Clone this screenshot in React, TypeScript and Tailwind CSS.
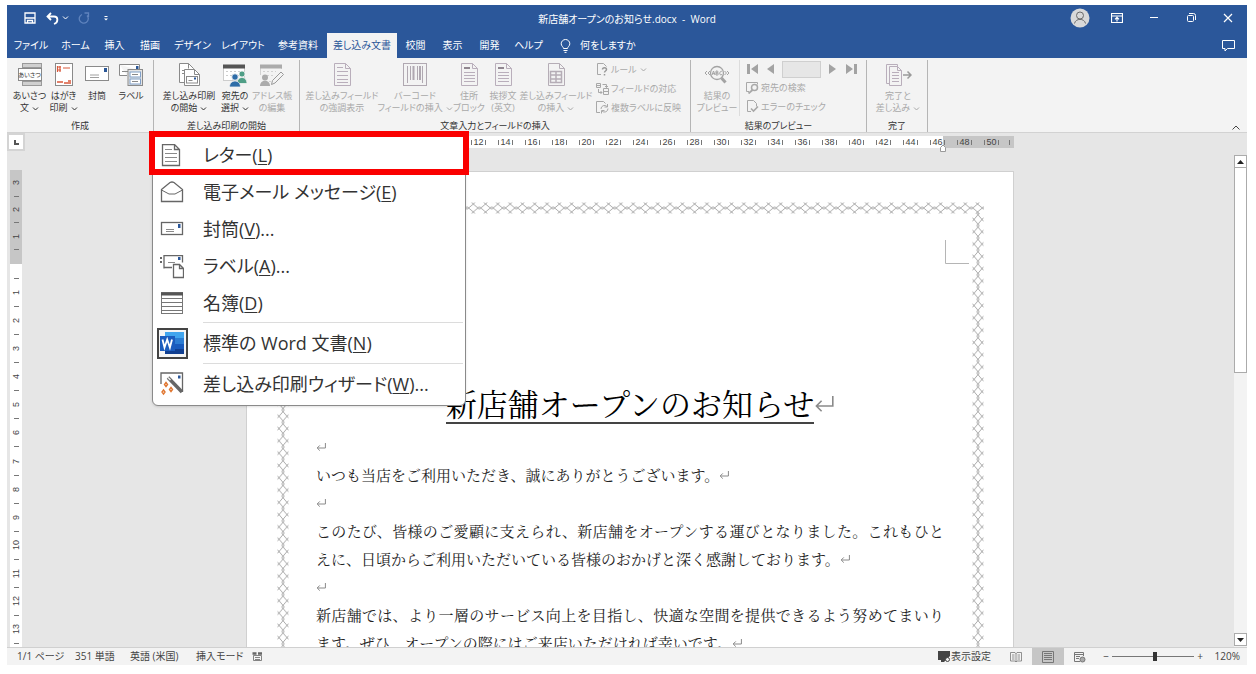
import { ReactNode, SVGProps } from "react";

type IconProps = SVGProps<SVGSVGElement>;

function Icon({ children, size = 24, ...rest }: IconProps & { size?: number }) {
  return (
    <svg width={size} height={size} viewBox={`0 0 ${size} ${size}`} fill="none" stroke="currentColor" aria-hidden="true" className="shrink-0" {...rest}>
      {children}
    </svg>
  );
}

const Chevron = () => (
  <svg width="7" height="6" viewBox="0 0 7 6" fill="none" stroke="currentColor" className="ml-[3px] inline-block align-middle" aria-hidden="true">
    <path d="M1 1.5l2.5 2.5L6 1.5" />
  </svg>
);

const ReturnMark = ({ size = 10 }: { size?: number }) => (
  <svg width={size} height={size} viewBox="0 0 10 10" fill="none" stroke="#8a8a8a" strokeWidth={size > 10 ? 0.8 : 1} className="inline-block align-[1px]" aria-hidden="true">
    <path d="M9.4 1v5H1.2M3.8 3.4L1.2 6l2.6 2.6" />
  </svg>
);

/* ---------- ribbon icons (24px) ---------- */
const GreetingIcon = () => (
  <span className="flex h-6 w-6 flex-col">
    <i className="ml-1 h-[5px] border border-[#9a9a9a] bg-[#d0d0d0]" />
    <b className="flex h-[13px] items-center justify-center border border-[#8a8a8a] bg-white text-[6px] leading-none font-normal whitespace-nowrap text-[#333]">あいさつ</b>
    <i className="ml-1 h-[5px] border border-[#9a9a9a] bg-[#d0d0d0]" />
  </span>
);
const PostcardIcon = () => (
  <Icon stroke="#8a8a8a">
    <rect x="3.5" y="0.5" width="17" height="22" fill="#fff" />
    <path d="M5.5 3v6M8 3v6M5 4h4M5 7h4M11 5h7" stroke="#d9583b" strokeWidth="1.2" />
    <path d="M5 19h6M12 20h5M16 18h3M17 20h2" stroke="#d9583b" strokeWidth="1.4" />
  </Icon>
);
const EnvelopeIcon = () => (
  <Icon stroke="#8a8a8a">
    <rect x="0.5" y="3.5" width="23" height="14" fill="#fff" />
    <path d="M5 12h9M5 14.5h9" stroke="#a0a0a0" />
    <rect x="19" y="5" width="3" height="4" fill="#2b5797" stroke="none" />
  </Icon>
);
const LabelsIcon = () => (
  <Icon stroke="#8a8a8a">
    <path d="M0.5 1.5h20v6M8 12.5H0.5v-11" fill="#fff" />
    <path d="M3 8.5h8" />
    <rect x="17" y="3" width="2.5" height="3" fill="#2b5797" stroke="none" />
    <rect x="9" y="6.5" width="14.5" height="16" fill="#e4e4e4" />
    <rect x="11" y="9" width="10.5" height="5" fill="#fff" stroke="#7f9fc8" />
    <rect x="11" y="16" width="10.5" height="5" fill="#fff" stroke="#7f9fc8" />
    <path d="M13 11.5h6M13 18.5h6" />
  </Icon>
);
const MergeStartIcon = () => (
  <Icon stroke="#8a8a8a">
    <path d="M2.5 0.5h9l5 5v14h-14z" fill="#fff" />
    <path d="M11.5 0.5v5M5 7.5h3M5 10.5h2" />
    <path d="M7.5 6.5h10l5 5v11h-15z" fill="#fff" />
    <path d="M17.5 6.5v5h5" />
    <rect x="9.5" y="13.5" width="11" height="6.5" />
    <path d="M11.5 17.5h4" />
    <rect x="17" y="14.5" width="2" height="2" fill="#2b5797" stroke="none" />
  </Icon>
);
const RecipientsIcon = () => (
  <Icon stroke="#cdcdcd">
    <rect x="0.5" y="2.5" width="21" height="15" fill="#fff" />
    <path d="M3 8.5h16M3 12.5h16" strokeDasharray="2 2" />
    <rect x="0" y="1.5" width="22" height="4" fill="#555" stroke="none" />
    <g stroke="#f3f3f3" strokeWidth="0.8">
      <circle cx="19" cy="11" r="3" fill="#4f9e86" />
      <path d="M14 20.5c0-8 10-8 10 0z" fill="#4f9e86" />
      <circle cx="12" cy="14" r="3.2" fill="#2e6da8" />
      <path d="M6.5 24c0-8 11-8 11 0z" fill="#2e6da8" />
    </g>
  </Icon>
);
const AddressEditIcon = () => (
  <Icon stroke="#d2d2d2">
    <path d="M0.5 12V2.5h21V6M9 18.5h2" />
    <path d="M3 8.5h13M3 12.5h10" strokeDasharray="2 2" />
    <rect x="0" y="1.5" width="22" height="4" fill="#ababab" stroke="none" />
    <circle cx="5" cy="14.5" r="3" fill="#ababab" stroke="none" />
    <path d="M0 23c0-7 10-7 10 0z" fill="#ababab" stroke="none" />
    <path d="M11.5 21.5l1-4L21 9l2.5 2.5L15 20z" fill="#f3f3f3" stroke="#9a9a9a" />
  </Icon>
);
const DocPath = () => <path d="M4.5 0.5h11l5 5v17h-16zM15.5 0.5v5h5" />;
const HighlightIcon = () => (
  <Icon stroke="#b9aebb">
    <DocPath />
    <path d="M7 4.5h6M7 8.5h11M7 12.5h11M7 16.5h11M7 19.5h11" />
  </Icon>
);
const BarcodeIcon = () => (
  <Icon stroke="#b0a8b1">
    <rect x="0.5" y="0.5" width="23" height="22" />
    <path d="M4.5 3v17M7.5 3v14M14.5 3v14M19.5 3v17" />
    <path d="M10.5 3v14M17 3v14" strokeWidth="2" />
  </Icon>
);
const AddressBlockIcon = () => (
  <Icon stroke="#b9aebb">
    <DocPath />
    <path d="M7 5h6" stroke="#908690" strokeWidth="2" />
    <path d="M7 9.5h11M7 12.5h11M7 15.5h11M7 18.5h11" />
  </Icon>
);
const InsertFieldIcon = () => (
  <Icon stroke="#b5adb6">
    <DocPath />
    <path d="M6.5 8.5h11v11h-11zM6.5 12h11M6.5 16h11M12 8.5v11" strokeWidth="1.5" />
  </Icon>
);
const PreviewIcon = () => (
  <Icon size={26} stroke="#a3a3a3">
    <circle cx="13" cy="10" r="6.5" strokeWidth="1.3" />
    <path d="M17.5 15l4 4.5" strokeWidth="3" />
    <path d="M3 8L1 10l2 2M6 8l-2 2 2 2M23 8l2 2-2 2M20.5 8l2 2-2 2" />
    <path d="M8 12l1.5-4L11 12M8.5 10.7h2M12 8v4h1.3a1 1 0 0 0 0-2H12h1a1 1 0 0 0 0-2zM18 8.5c-2.5-1.5-3.5 5 0 3" strokeWidth="1" />
  </Icon>
);
const FinishIcon = () => (
  <Icon size={28} stroke="#b9aebb">
    <path d="M2.5 1.5h11v19h-11z" />
    <path d="M5.5 3.5h8l4 4v15h-12z" fill="#f3f3f3" />
    <path d="M13.5 3.5v4h4M8 9.5h7M8 12.5h7M8 15.5h7M8 18.5h7" />
    <path d="M19 12h8M23.5 8.5L27 12l-3.5 3.5" stroke="#9a9a9a" strokeWidth="1.5" />
  </Icon>
);

const RulesIcon = () => (
  <Icon size={13} stroke="#a8a8a8">
    <path d="M5 11.5H1.5v-11h6l3 3" />
    <path d="M6.5 6.5c0-2.5 4-2.5 4 0 0 1.5-2 1.5-2 3M8.5 11v1.5" stroke="#999" strokeWidth="1.5" />
  </Icon>
);
const MatchIcon = () => (
  <Icon size={13} stroke="#a8a8a8">
    <path d="M0.5 1.5h4v4h-4zM7.5 6.5h5v6h-5zM6.5 2.5h4v3M2.5 7v3.5h3.5M1 3.5h3M8 9.5h4M9 4l1.5 1.5L12 4M4.5 9L6 10.5 4.5 12" />
  </Icon>
);
const UpdateIcon = () => (
  <Icon size={13} stroke="#a8a8a8">
    <path d="M4 11.5H0.5v-11h7l2 2" />
    <path d="M5 8a3.5 3.5 0 0 1 6-2.5M12 7.5a3.5 3.5 0 0 1-6 2.5M11.5 3v3H8.5M5.5 12.5V9.5h3" />
  </Icon>
);
const FindIcon = () => (
  <Icon size={13} stroke="#a8a8a8">
    <path d="M3 10.5H0.5v-9h11v2" />
    <circle cx="8.5" cy="6.5" r="3" strokeWidth="1.5" />
    <path d="M6.5 9l-4 3.5" strokeWidth="1.8" />
  </Icon>
);
const CheckIcon = () => (
  <Icon size={13} stroke="#a8a8a8">
    <path d="M5 11.5H1.5v-11h6l3 3v3" />
    <path d="M5 8.5l2.5 2.5L12 6.5" strokeWidth="1.6" />
  </Icon>
);

/* ---------- title bar ---------- */
const TitleBar = () => (
  <header className="relative flex h-[26px] items-center justify-between text-[10px] text-white">
    <div className="flex items-center pl-[17px]">
      <button aria-label="上書き保存">
        <Icon size={12}>
          <path d="M1 1h10v10H1zM1 6h10M3.5 11V8.5h5V11" strokeWidth="1.3" />
        </Icon>
      </button>
      <button aria-label="元に戻す" className="ml-[10px] flex items-center">
        <Icon size={13}>
          <path d="M5 1L1.5 4.5 5 8M2 4.5h6c4.500 0 4.500 6 0 7.5" strokeWidth="1.8" />
        </Icon>
        <Chevron />
      </button>
      <button aria-label="やり直し" disabled className="ml-[9px] text-[#5f83bd]">
        <Icon size={12}>
          <path d="M4 2.5a4.5 4.5 0 1 0 5 1M6.5 1h4v4" strokeWidth="1.3" />
        </Icon>
      </button>
      <button aria-label="クイック アクセス ツール バーのカスタマイズ" className="ml-[13px]">
        <Icon size={6}>
          <path d="M1.5 1.5h3" />
          <path d="M1 3.5h4L3 5.5z" fill="currentColor" stroke="none" />
        </Icon>
      </button>
    </div>
    <h1 className="absolute inset-x-0 top-[6px] text-center leading-4">新店舗オープンのお知らせ.docx&nbsp; -&nbsp; Word</h1>
    <div className="relative flex items-center">
      <button aria-label="アカウント" className="mr-[21px]">
        <Icon size={20} stroke="#6b6b6b">
          <circle cx="10" cy="10" r="9.5" fill="#d9d9d9" stroke="none" />
          <circle cx="10" cy="7.5" r="3.5" />
          <path d="M4.5 15.5c1-5.5 10-5.5 11 0" />
        </Icon>
      </button>
      <button aria-label="リボンの表示オプション" className="mr-[26px]">
        <Icon size={12}>
          <path d="M0.5 1.5h11v9H0.5zM0.5 4h11M6 9.5V5.5M4 7.3l2-2 2 2" strokeWidth="1.2" />
        </Icon>
      </button>
      <button aria-label="最小化" className="mr-[27px]">
        <Icon size={10}>
          <path d="M1 4.5h8" />
        </Icon>
      </button>
      <button aria-label="元に戻す (縮小)" className="mr-[27px]">
        <Icon size={10}>
          <rect x="1.5" y="2.5" width="6" height="6" rx="1" />
          <path d="M3 0.5h4.500q2 0 2 2V7" />
        </Icon>
      </button>
      <button aria-label="閉じる" className="mr-[14px]">
        <Icon size={10}>
          <path d="M1 1l8 8M9 1L1 9" strokeWidth="1.2" />
        </Icon>
      </button>
    </div>
  </header>
);

const TABS: [string, string][] = [
  ["ファイル", "w-[46px]"],
  ["ホーム", "w-[43px]"],
  ["挿入", "w-[35px]"],
  ["描画", "w-[36px]"],
  ["デザイン", "w-[49px]"],
  ["レイアウト", "w-[52px]"],
  ["参考資料", "w-[58px]"],
  ["差し込み文書", "w-[70px]"],
  ["校閲", "w-[37px]"],
  ["表示", "w-[37px]"],
  ["開発", "w-[37px]"],
  ["ヘルプ", "w-[41px]"],
];

const TabBar = () => (
  <nav className="flex h-[27px] items-end pl-px text-[10px] text-white" role="tablist">
    {TABS.map(([name, width]) => {
      const active = name === "差し込み文書";
      return (
        <button
          key={name}
          role="tab"
          aria-selected={active}
          className={`h-[25px] whitespace-nowrap text-center ${width} ${active ? "bg-[#f3f3f3] text-[#2b579a]" : ""}`}
        >
          {name}
        </button>
      );
    })}
    <button className="ml-[11px] flex h-[25px] items-center gap-[9px]">
      <svg width="11" height="14" viewBox="0 0 11 14" fill="none" stroke="currentColor" aria-hidden="true">
        <path d="M3.5 9.5C3.5 8 1.2 7 1.2 4.8a4.3 4.3 0 0 1 8.6 0C9.8 7 7.5 8 7.5 9.5zM3.5 11.5h4M4.5 13.4h2" />
      </svg>
      何をしますか
    </button>
    <button aria-label="コメント" className="mr-3 ml-auto flex h-[25px] items-center">
      <Icon size={13}>
        <path d="M0.5 1.5h12v8H5.5L3 12V9.5H0.5z" />
      </Icon>
    </button>
  </nav>
);

/* ---------- ribbon ---------- */
function BigButton({ icon, lines, width, disabled, menu }: { icon: ReactNode; lines: string[]; width: string; disabled?: boolean; menu?: boolean }) {
  return (
    <button disabled={disabled} className={`flex shrink-0 flex-col items-center ${width} ${disabled ? "text-[#a9a9a9]" : "text-[#333]"}`}>
      <span className="flex h-[27px] items-start justify-center">{icon}</span>
      {lines.map((line, i) => (
        <span key={line} className="whitespace-nowrap leading-3">
          {line}
          {menu && i === lines.length - 1 && <Chevron />}
        </span>
      ))}
    </button>
  );
}

function SmallButton({ icon, children }: { icon: ReactNode; children: ReactNode }) {
  return (
    <button disabled className="flex h-[19px] items-center gap-[2px] whitespace-nowrap text-[#a9a9a9]">
      {icon}
      <span>{children}</span>
    </button>
  );
}

function Group({ label, width, children }: { label: string; width: string; children: ReactNode }) {
  return (
    <section aria-label={label} className={`flex shrink-0 flex-col border-r border-[#b5b5b5] ${width}`}>
      <div className="flex min-h-0 flex-1 items-start">{children}</div>
      <p className="text-center leading-3 text-[#333]">{label}</p>
    </section>
  );
}

const Ribbon = () => (
  <div className="relative flex h-[75px] border-b border-[#d2d2d2] bg-[#f3f3f3] pt-[2px] text-[9px]">
    <Group label="作成" width="w-[147px]">
      <div className="flex pt-[3px] pl-[5px]">
        <BigButton icon={<GreetingIcon />} lines={["あいさつ", "文"]} width="w-[35px]" menu />
        <BigButton icon={<PostcardIcon />} lines={["はがき", "印刷"]} width="w-[33px]" menu />
        <BigButton icon={<EnvelopeIcon />} lines={["封筒"]} width="w-[34px]" />
        <BigButton icon={<LabelsIcon />} lines={["ラベル"]} width="w-[34px]" />
      </div>
    </Group>
    <Group label="差し込み印刷の開始" width="w-[146px]">
      <div className="flex pt-[3px] pl-[6px]">
        <BigButton icon={<MergeStartIcon />} lines={["差し込み印刷", "の開始"]} width="w-[58px]" menu />
        <BigButton icon={<RecipientsIcon />} lines={["宛先の", "選択"]} width="w-[34px]" menu />
        <BigButton icon={<AddressEditIcon />} lines={["アドレス帳", "の編集"]} width="w-[40px]" disabled />
      </div>
    </Group>
    <Group label="文章入力とフィールドの挿入" width="w-[391px]">
      <div className="flex pt-[3px] pl-[5px]">
        <BigButton icon={<HighlightIcon />} lines={["差し込みフィールド", "の強調表示"]} width="w-[74px]" disabled />
        <BigButton icon={<BarcodeIcon />} lines={["バーコード", "フィールドの挿入"]} width="w-[72px]" disabled menu />
        <BigButton icon={<AddressBlockIcon />} lines={["住所", "ブロック"]} width="w-[36px]" disabled />
        <BigButton icon={<AddressBlockIcon />} lines={["挨拶文", "(英文)"]} width="w-[32px]" disabled />
        <BigButton icon={<InsertFieldIcon />} lines={["差し込みフィールド", "の挿入"]} width="w-[74px]" disabled menu />
      </div>
      <div className="pl-[3px]">
        <SmallButton icon={<RulesIcon />}>
          ルール
          <Chevron />
        </SmallButton>
        <SmallButton icon={<MatchIcon />}>フィールドの対応</SmallButton>
        <SmallButton icon={<UpdateIcon />}>複数ラベルに反映</SmallButton>
      </div>
    </Group>
    <Group label="結果のプレビュー" width="w-[176px]">
      <div className="pt-[3px] pl-[5px]">
        <BigButton icon={<PreviewIcon />} lines={["結果の", "プレビュー"]} width="w-[42px]" disabled />
      </div>
      <div className="ml-px border-l border-[#dcdcdc] pl-[6px]">
        <div className="flex h-[18px] items-center text-[#a3a3a3]">
          <button disabled aria-label="先頭のレコード">
            <Icon size={12} fill="currentColor" stroke="none">
              <path d="M1 1h3v10H1zM12 1v10L5 6z" />
            </Icon>
          </button>
          <button disabled aria-label="前のレコード" className="ml-2">
            <Icon size={10} fill="currentColor" stroke="none">
              <path d="M8 0v10L1 5z" />
            </Icon>
          </button>
          <input disabled aria-label="レコード" className="ml-[6px] h-[17px] w-[39px] border border-[#cfcfcf] bg-[#e6e6e6]" />
          <button disabled aria-label="次のレコード" className="ml-[7px]">
            <Icon size={10} fill="currentColor" stroke="none">
              <path d="M1 0v10l7-5z" />
            </Icon>
          </button>
          <button disabled aria-label="最後のレコード" className="ml-2">
            <Icon size={12} fill="currentColor" stroke="none">
              <path d="M8 1h3v10H8zM0 1v10l7-5z" />
            </Icon>
          </button>
        </div>
        <SmallButton icon={<FindIcon />}>宛先の検索</SmallButton>
        <SmallButton icon={<CheckIcon />}>エラーのチェック</SmallButton>
      </div>
    </Group>
    <Group label="完了" width="w-[61px]">
      <div className="pt-[3px] pl-1">
        <BigButton icon={<FinishIcon />} lines={["完了と", "差し込み"]} width="w-[54px]" disabled menu />
      </div>
    </Group>
    <button aria-label="リボンを折りたたむ" className="mt-auto mr-[7px] mb-[1px] ml-auto text-[#444]">
      <svg width="8" height="6" viewBox="0 0 8 6" fill="none" stroke="currentColor" aria-hidden="true">
        <path d="M0.5 4.5L4 1l3.5 3.5" />
      </svg>
    </button>
  </div>
);

/* ---------- rulers ---------- */
const HorizontalRuler = () => (
  <div className="relative mt-[3px] ml-[3px] flex h-[12px] w-[768px] shrink-0 bg-[linear-gradient(to_right,#c6c6c6_70px,#fff_70px,#fff_697px,#c6c6c6_697px)] pl-[84px] font-['Liberation_Sans',sans-serif] text-[9px] leading-3 text-[#444]">
    {Array.from({ length: 25 }, (_, i) => (
      <div key={i} className="flex w-[27px] items-center justify-center gap-px">
        <i className="h-[5px] w-px bg-[#777]" />
        {(i + 1) * 2}
        <i className="h-[5px] w-px bg-[#777]" />
      </div>
    ))}
    <i className="ml-1 h-[5px] w-px shrink-0 self-center bg-[#777]" />
    <svg width="8" height="8" viewBox="0 0 8 8" fill="#fff" stroke="#999" className="absolute top-2 left-[693px]" aria-hidden="true">
      <path d="M1.5 7.5v-4L4 1l2.5 2.5v4z" />
    </svg>
  </div>
);

const RulerNumber = ({ value }: { value: number }) => (
  <div className="flex min-h-0 flex-1 items-center justify-center">
    <span className="rotate-180 leading-3 [writing-mode:vertical-rl]">{value}</span>
  </div>
);
const RulerDash = () => <i className="mx-auto h-px w-[5px] shrink-0 bg-[#777]" />;

const VerticalRuler = () => (
  <div className="ml-[3px] flex w-[12px] flex-1 flex-col font-['Liberation_Sans',sans-serif] text-[9px] text-[#444]">
    <div className="flex h-[94px] shrink-0 flex-col bg-[#c6c6c6] pb-[14px]">
      {[3, 2, 1].map((n) => (
        <div key={n} className="flex min-h-0 flex-1 flex-col">
          <RulerNumber value={n} />
          <RulerDash />
        </div>
      ))}
    </div>
    <div className="flex flex-1 flex-col bg-white pt-[14px] pb-[3px]">
      {Array.from({ length: 13 }, (_, i) => (
        <div key={i} className="flex min-h-0 flex-1 flex-col">
          <RulerDash />
          <RulerNumber value={i + 1} />
        </div>
      ))}
      <RulerDash />
    </div>
  </div>
);

/* ---------- document ---------- */
const PageBorder = () => (
  <svg className="absolute inset-0 h-full w-full" aria-hidden="true" fill="none">
    <defs>
      <pattern id="art-h" width="12.3" height="12" patternUnits="userSpaceOnUse" x="11" y="30">
        <path d="M4.4 0.5L12.3 7.3M4.4 11.5L12.3 4.7M7.9 0.5L0 7.3M7.9 11.5L0 4.7" stroke="#888" strokeWidth="0.7" />
      </pattern>
      <pattern id="art-v" width="12" height="12.3" patternUnits="userSpaceOnUse" x="30" y="29">
        <path d="M0.5 4.4L7.3 12.3M11.5 4.4L4.7 12.3M0.5 7.9L7.3 0M11.5 7.9L4.7 0" stroke="#888" strokeWidth="0.7" />
      </pattern>
    </defs>
    <rect x="30" y="30" width="707" height="12" fill="url(#art-h)" />
    <rect x="30" y="41" width="12" height="600" fill="url(#art-v)" />
    <rect x="30" y="41" width="12" height="600" fill="url(#art-v)" transform="translate(695 0)" />
    <path d="M698.5 68v23.500H722" stroke="#b5b5b5" />
  </svg>
);

const Page = () => (
  <article className="relative mt-[23px] ml-[3px] w-[768px] flex-1 border border-b-0 border-[#d0d0d0] bg-white px-[69px] pt-[203px] font-['Noto_Serif_CJK_JP','Noto_Serif_JP','Noto_Sans_CJK_JP',serif] text-[15px] leading-7 text-[#222] [font-feature-settings:normal]">
    <PageBorder />
    <h2 className="flex h-[58px] items-center justify-center pl-[20px] text-[31px] text-black">
      <span className="border-b-2 border-[#444] leading-[38px] whitespace-nowrap">新店舗オープンのお知らせ</span>
      <ReturnMark size={20} />
    </h2>
    <p><ReturnMark /></p>
    <p>いつも当店をご利用いただき、誠にありがとうございます。<ReturnMark /></p>
    <p><ReturnMark /></p>
    <p className="text-justify">このたび、皆様のご愛顧に支えられ、新店舗をオープンする運びとなりました。これもひとえに、日頃からご利用いただいている皆様のおかげと深く感謝しております。<ReturnMark /></p>
    <p><ReturnMark /></p>
    <p className="text-justify">新店舗では、より一層のサービス向上を目指し、快適な空間を提供できるよう努めてまいります。ぜひ、オープンの際にはご来店いただければ幸いです。<ReturnMark /></p>
  </article>
);

const ScrollBar = () => (
  <div className="mt-[22px] flex w-[13px] shrink-0 flex-col bg-[#f3f3f3]">
    <button aria-label="上へスクロール" className="flex h-[13px] items-center justify-center border border-[#ababab] bg-white">
      <svg width="7" height="4" viewBox="0 0 7 4" aria-hidden="true"><path d="M3.5 0L7 4H0z" fill="#222" /></svg>
    </button>
    <div className="h-[205px] border border-t-0 border-[#ababab] bg-white" />
    <button aria-label="下へスクロール" className="mt-auto mb-[1px] flex h-[13px] items-center justify-center border border-[#ababab] bg-white">
      <svg width="7" height="4" viewBox="0 0 7 4" aria-hidden="true"><path d="M3.5 4L7 0H0z" fill="#222" /></svg>
    </button>
  </div>
);

/* ---------- merge menu ---------- */
const LetterIcon = () => (
  <Icon stroke="#666">
    <path d="M2.5 0.5h12l5 5v16h-17zM14.5 0.5v5h5" strokeWidth="1.3" />
    <path d="M5 5.5h7M5 9.5h12M5 13.5h12M5 17.5h12" stroke="#8a8a8a" />
  </Icon>
);
const MailIcon = () => (
  <Icon stroke="#666">
    <path d="M1.5 8.5L10 1.5q2-1 4 0l8.5 7v12h-21z" strokeWidth="1.3" />
    <path d="M1.5 9l7.5 4h6l7.5-4" />
  </Icon>
);
const MenuEnvelopeIcon = () => (
  <Icon stroke="#666">
    <rect x="1.5" y="4.5" width="21" height="12" strokeWidth="1.3" />
    <path d="M6 11.5h8M6 13.5h8" stroke="#8a8a8a" />
    <rect x="18" y="6" width="2.5" height="4" fill="#2b579a" stroke="none" />
  </Icon>
);
const MenuLabelsIcon = () => (
  <Icon stroke="#666">
    <path d="M4 13.5v-13h18.5v7M4 12.5h8" strokeWidth="1.3" />
    <path d="M0 3h2M0 7h2" strokeWidth="2" />
    <path d="M8 7.5h7" stroke="#8a8a8a" />
    <rect x="18" y="2" width="2.5" height="3" fill="#2b579a" stroke="none" />
    <path d="M13.5 9.5h6l4 4v9h-10zM19.5 9.5v4h4" fill="#fff" strokeWidth="1.3" />
  </Icon>
);
const DirectoryIcon = () => (
  <Icon stroke="#777">
    <rect x="1.5" y="0.5" width="21" height="21" />
    <path d="M1 2h22" stroke="#555" strokeWidth="3" />
    <path d="M2 6.5h20M2 10.5h20M2 14.5h20M2 18.5h20" />
  </Icon>
);
const WordIcon = () => (
  <Icon size={31} stroke="none">
    <rect x="1" y="1" width="29" height="29" fill="#f5f5f5" stroke="#444" strokeWidth="2" />
    <path d="M8 4h19v6H8z" fill="#41a5ee" />
    <path d="M8 10h19v6H8z" fill="#2b7cd3" />
    <path d="M8 16h19v5H8z" fill="#185abd" />
    <path d="M8 21h19v5H8z" fill="#103f91" />
    <rect x="3" y="8" width="15" height="15" fill="#1b5cbe" />
    <path d="M5.5 11.5l2 8 2.7-8 2.7 8 2.100-8" fill="none" stroke="#fff" strokeWidth="1.8" />
  </Icon>
);
const WizardIcon = () => (
  <Icon stroke="#666">
    <path d="M1 12V1h21.5V20" strokeWidth="1.3" />
    <rect x="18" y="3.5" width="2.5" height="3" fill="#2b579a" stroke="none" />
    <path d="M8 5.5L22 20" strokeWidth="3.5" />
    <path d="M8 5.5l2.5 2.5" stroke="#eee" strokeWidth="1.5" />
    <path d="M6 10.5l1.500 2L6 14.500l-1.500-2zM3.5 18l1.500 2-1.500 2L2 20zM11 15.500l1.500 2-1.500 2-1.500-2z" stroke="#e0752f" strokeWidth="1.4" />
  </Icon>
);

type Item = { icon: ReactNode; text: string; accessKey: string; tail: string; divided?: boolean };
const ITEMS: Item[] = [
  { icon: <LetterIcon />, text: "レター", accessKey: "L", tail: "" },
  { icon: <MailIcon />, text: "電子メール メッセージ", accessKey: "E", tail: "" },
  { icon: <MenuEnvelopeIcon />, text: "封筒", accessKey: "V", tail: "..." },
  { icon: <MenuLabelsIcon />, text: "ラベル", accessKey: "A", tail: "..." },
  { icon: <DirectoryIcon />, text: "名簿", accessKey: "D", tail: "" },
  { icon: <WordIcon />, text: "標準の Word 文書", accessKey: "N", tail: "", divided: true },
  { icon: <WizardIcon />, text: "差し込み印刷ウィザード", accessKey: "W", tail: "...", divided: true },
];

const MergeMenu = () => (
  <div role="menu" className="absolute top-[130px] left-[145px] w-[314px] rounded-b-[6px] border border-[#8a8a8a] bg-white pt-px pb-px text-[18px] text-[#333] shadow-sm">
    {ITEMS.map((item) => (
      <div key={item.accessKey} className="flex flex-col">
        {item.divided && <hr className="mr-[2px] ml-[50px] border-[#dcdcdc]" />}
        <button role="menuitem" className={`flex items-center text-left ${item.divided ? "h-10" : "h-[37px]"}`}>
          <span className="flex w-[38px] justify-center">{item.icon}</span>
          <span className="pl-3 whitespace-pre">
            {item.text}(<u className="underline-offset-2">{item.accessKey}</u>){item.tail}
          </span>
        </button>
      </div>
    ))}
    <div className="pointer-events-none absolute -top-[5px] -left-1 h-[44px] w-[320px] border-[6px] border-[#fa0000]" />
  </div>
);

/* ---------- status bar ---------- */
const StatusBar = () => (
  <footer className="flex h-[18px] shrink-0 items-center border-t border-[#d0d0d0] bg-[#f3f3f3] pl-[10px] text-[10px] text-[#444]">
    <span className="w-[58px]">1/1 ページ</span>
    <span className="w-[55px]">351 単語</span>
    <span className="w-[66px]">英語 (米国)</span>
    <span className="w-[56px]">挿入モード</span>
    <Icon size={10} stroke="#666">
      <path d="M1.5 3.5h8v5h-8zM3 5.5h5M3 7.5h5" strokeWidth="0.8" />
      <path d="M0.5 1.5h4M6 1.5h4" strokeWidth="2.5" />
    </Icon>
    <div className="ml-auto flex h-full items-center">
      <button className="flex items-center">
        <svg width="14" height="12" viewBox="0 0 14 12" fill="none" aria-hidden="true">
          <path d="M1 0h12v5L9 9l-2 2H4V9H1z" fill="#444" />
          <circle cx="10.5" cy="8.5" r="2" fill="#f3f3f3" stroke="#444" />
        </svg>
        表示設定
      </button>
      <button aria-label="閲覧モード" className="flex w-[41px] justify-center pl-2">
        <Icon size={12} stroke="#777">
          <path d="M6 2v9M0.5 1.5H5l1 1 1-1h4.500v8.500H7l-1 1-1-1H0.5zM2 4h2.5M2 6h2.5M2 8h2.5M7.5 4H10M7.5 6H10M7.5 8H10" strokeWidth="0.8" />
        </Icon>
      </button>
      <button aria-label="印刷レイアウト" className="flex h-full w-8 items-center justify-center bg-[#c6c6c6]">
        <Icon size={12} stroke="#777">
          <path d="M0.5 0.5h11v11H0.5zM2 2.5h8M2 4.5h8M2 6.5h8M2 8.5h8" />
        </Icon>
      </button>
      <button aria-label="Web レイアウト" className="flex w-[32px] justify-center">
        <Icon size={12} stroke="#777">
          <path d="M6 10.5H0.5v-9h9V5M0.5 3.5h9M2 5.5h4M2 7.5h3" />
          <circle cx="8.5" cy="8.5" r="2.5" fill="#aaa" />
        </Icon>
      </button>
      <button aria-label="縮小" className="ml-1 w-3">−</button>
      <div className="flex w-[82px] items-center">
        <input type="range" aria-label="ズーム" min="10" max="190" defaultValue="104" className="h-px w-full appearance-none bg-[#777] [&::-webkit-slider-thumb]:h-[9px] [&::-webkit-slider-thumb]:w-1 [&::-webkit-slider-thumb]:appearance-none [&::-webkit-slider-thumb]:bg-[#333]" />
      </div>
      <button aria-label="拡大" className="w-3">+</button>
      <span className="w-[41px] pr-[7px] text-right">120%</span>
    </div>
  </footer>
);

export default function App() {
  return (
    <div className="h-screen bg-white pt-[5px] pr-[9px] pb-[9px] pl-[7px] font-['Open_Sans','Noto_Sans_CJK_JP',sans-serif] [font-feature-settings:'palt']" lang="ja">
      <div className="relative flex h-full flex-col">
        <div className="shrink-0 bg-[#2b579a]">
          <TitleBar />
          <TabBar />
        </div>
        <div className="shrink-0">
          <Ribbon />
        </div>
        <main className="flex min-h-0 flex-1 overflow-hidden bg-[#e6e6e6]">
          <div className="flex w-[16px] shrink-0 flex-col">
            <button aria-label="左揃えタブ" className="mb-[19px] flex h-[18px] w-[18px] shrink-0 items-center justify-center border-2 border-[#d4d4d4] bg-white">
              <svg width="5" height="5" viewBox="0 0 5 5" aria-hidden="true"><path d="M1 0v4h4" fill="none" stroke="#555" strokeWidth="2" /></svg>
            </button>
            <VerticalRuler />
          </div>
          <div className="flex min-w-0 flex-1 flex-col items-center overflow-hidden">
            <HorizontalRuler />
            <Page />
          </div>
          <ScrollBar />
        </main>
        <StatusBar />
        <MergeMenu />
      </div>
    </div>
  );
}
